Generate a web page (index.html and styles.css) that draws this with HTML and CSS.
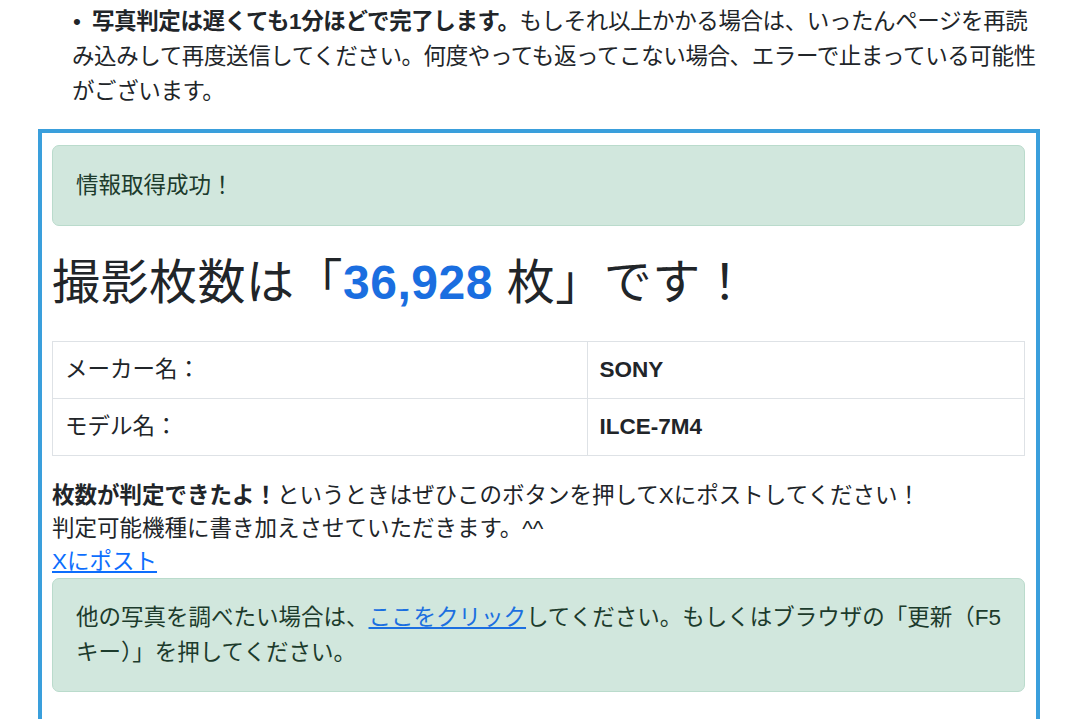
FILE: index.html
```html
<!DOCTYPE html>
<html lang="ja">
<head>
<meta charset="utf-8">
<title>撮影枚数</title>
<link rel="stylesheet" href="styles.css">
</head>
<body>
<ul class="notes">
  <li><strong>写真判定は遅くても1分ほどで完了します。</strong>もしそれ以上かかる場合は、いったんページを再読み込みして再度送信してください。何度やっても返ってこない場合、エラーで止まっている可能性がございます。</li>
</ul>
<section class="result">
  <div class="alert">情報取得成功！</div>
  <h1 class="count">撮影枚数は「<span class="num">36,928</span> 枚」です！</h1>
  <table class="info">
    <tr><td class="label">メーカー名：</td><td class="value">SONY</td></tr>
    <tr><td class="label">モデル名：</td><td class="value">ILCE-7M4</td></tr>
  </table>
  <p class="share"><strong>枚数が判定できたよ！</strong>というときはぜひこのボタンを押してXにポストしてください！<br>判定可能機種に書き加えさせていただきます。^^<br><a href="#">Xにポスト</a></p>
  <div class="alert alert-more">他の写真を調べたい場合は、<a href="#">ここをクリック</a>してください。もしくはブラウザの「更新（F5キー）」を押してください。</div>
</section>
</body>
</html>
```

FILE: styles.css
```css
html, body {
  margin: 0;
  padding: 0;
  background: #ffffff;
}

body {
  font-family: "Liberation Sans", "Noto Sans CJK JP", sans-serif;
  font-size: 22.5px;
  line-height: 35px;
  color: #212529;
  padding: 0 40px 0 38px;
}

.notes {
  margin: 4px 0 0 0;
  padding: 0 0 0 34px;
  list-style: none;
}

.notes li {
  letter-spacing: -0.4px;
}

.notes li::before {
  content: "•";
  display: inline-block;
  width: 20px;
  padding-left: 1px;
  box-sizing: border-box;
}

.notes strong {
  font-weight: 700;
}

.result {
  margin-top: 20px;
  border: 4px solid #3a9fdc;
  border-bottom: none;
  padding: 12px 11px 30px 10px;
}

.alert {
  background: #d1e7dd;
  border: 1px solid #badbcc;
  border-radius: 7px;
  color: #1c3b2c;
  padding: 22px 24px 22px 23px;
}

.alert-more {
  padding: 21px 16px 21px 23px;
}

.alert a {
  color: #1b6fe0;
}

.count {
  margin: 28px 0 29px 0;
  font-size: 48px;
  line-height: 58px;
  font-weight: 400;
  color: #212529;
  letter-spacing: 0.5px;
}

.num {
  color: #1a6ee0;
  font-weight: 700;
}

.info {
  width: 100%;
  border-collapse: collapse;
  margin: 0;
}

.info td {
  border: 1px solid #dee2e6;
  padding: 11px 12px;
  line-height: 34px;
}

.info .label {
  width: 55%;
}

.info .value {
  font-weight: 700;
}

.share {
  margin: 23px 0 0 0;
  line-height: 33px;
}

.share a {
  color: #0d6efd;
}
```
